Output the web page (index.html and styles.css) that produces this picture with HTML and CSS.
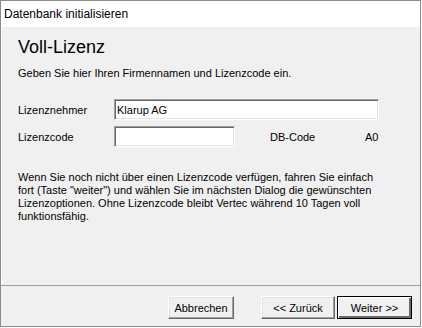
FILE: index.html
```html
<!DOCTYPE html>
<html lang="de">
<head>
  <meta charset="UTF-8">
  <title>Datenbank initialisieren</title>
  <link rel="stylesheet" href="styles.css">
</head>
<body>

  <div class="window">
    <!-- Titelleiste -->
    <div class="titlebar">Datenbank initialisieren</div>

    <!-- Inhalt -->
    <div class="page">
      <h1>Voll-Lizenz</h1>
      <p class="intro">Geben Sie hier Ihren Firmennamen und Lizenzcode ein.</p>

      <div class="form">
        <div class="row">
          <label class="label" for="owner">Lizenznehmer</label>
          <input type="text" id="owner" class="field field-wide" value="Klarup AG">
        </div>
        <div class="row">
          <label class="label" for="code">Lizenzcode</label>
          <input type="text" id="code" class="field field-short">
          <span class="db-label">DB-Code</span>
          <span class="db-value">A0</span>
        </div>
      </div>

      <p class="note">Wenn Sie noch nicht über einen Lizenzcode verfügen, fahren Sie einfach
        fort (Taste "weiter") und wählen Sie im nächsten Dialog die gewünschten
        Lizenzoptionen. Ohne Lizenzcode bleibt Vertec während 10 Tagen voll
        funktionsfähig.</p>
    </div>

    <!-- Buttons -->
    <div class="footer">
      <button class="btn btn-cancel">Abbrechen</button>
      <button class="btn btn-back">&lt;&lt; Zurück</button>
      <button class="btn btn-next default">Weiter &gt;&gt;</button>
    </div>
  </div>

</body>
</html>
```

FILE: styles.css
```css
html, body {
  margin: 0;
  padding: 0;
  background-color: #ffffff;
}

body {
  font-family: "Liberation Sans", Arial, sans-serif;
  font-size: 11px;
  color: #000000;
}

.window {
  width: 421px;
  height: 327px;
  border: 1px solid #8c8c8c;
  box-sizing: border-box;
  display: flex;
  flex-direction: column;
}

.titlebar {
  height: 26px;
  line-height: 26px;
  padding-left: 3px;
  font-size: 12px;
  background-color: #ffffff;
}

.page {
  flex: 1;
  background-color: #f0f0f0;
  border-left: 1px solid #ffffff;
  padding: 10px 16px 0 16px;
}

h1 {
  margin: 0;
  font-size: 18px;
  font-weight: normal;
  line-height: 20px;
}

.intro {
  margin: 10px 0 0 0;
  line-height: 13px;
}

.form {
  margin-top: 19px;
  display: flex;
  flex-direction: column;
  gap: 6px;
}

.row {
  display: flex;
  align-items: center;
  height: 21px;
}

.label {
  width: 96px;
}

/* eingelassenes Eingabefeld */
.field {
  height: 21px;
  box-sizing: border-box;
  margin: 0;
  padding: 0 2px;
  font-family: inherit;
  font-size: 11px;
  background-color: #ffffff;
  border: 1px solid;
  border-color: #a0a0a0 #ffffff #ffffff #a0a0a0;
  box-shadow: inset 1px 1px 0 #696969, inset -1px -1px 0 #e3e3e3;
  outline: none;
}

.field-wide {
  width: 265px;
}

.field-short {
  width: 121px;
}

.db-label {
  margin-left: 35px;
  width: 95px;
}

.note {
  margin: 24px 0 0 0;
  line-height: 13px;
  width: 360px;
}

.footer {
  height: 41px;
  background-color: #f0f0f0;
  border-top: 1px solid #a0a0a0;
  display: flex;
  justify-content: flex-end;
  align-items: flex-start;
  padding: 10px 8px 0 0;
  box-sizing: border-box;
}

.btn {
  height: 23px;
  margin: 0;
  padding: 0;
  font-family: inherit;
  font-size: 11px;
  color: #000000;
  background-color: #f0f0f0;
  border: 1px solid;
  border-color: #ffffff #696969 #696969 #ffffff;
  box-shadow: inset -1px -1px 0 #a0a0a0, inset 1px 1px 0 #e3e3e3;
  box-sizing: border-box;
}

.btn-cancel {
  width: 66px;
  margin-right: 27px;
}

.btn-back {
  width: 74px;
  margin-right: 2px;
}

.btn-next {
  width: 75px;
}

.default {
  border-color: #000000;
  box-shadow: inset 1px 1px 0 #ffffff, inset -2px -2px 0 #696969;
}
```
